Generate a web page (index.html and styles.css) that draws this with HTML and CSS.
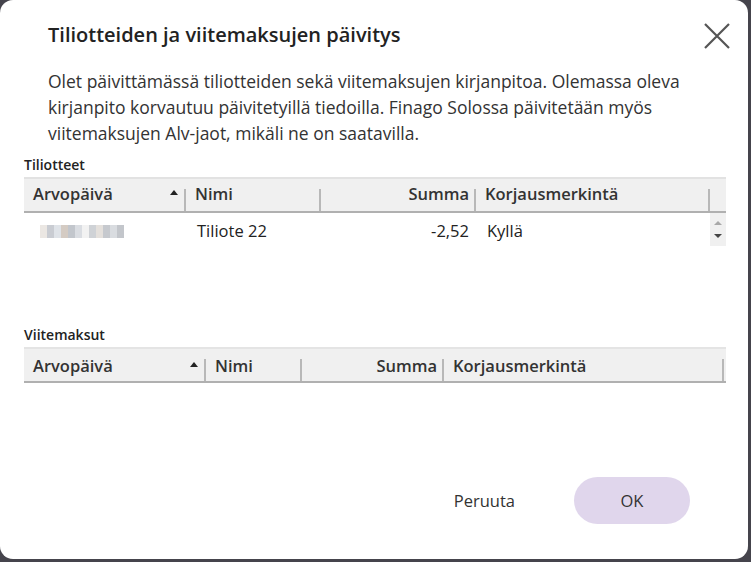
FILE: index.html
```html
<!DOCTYPE html>
<html lang="fi">
<head>
  <meta charset="UTF-8" />
  <title>Tiliotteiden ja viitemaksujen päivitys</title>
  <link rel="stylesheet" href="styles.css">
</head>
<body>

  <div class="dialog">
    <div class="dialog-head">
      <h1>Tiliotteiden ja viitemaksujen päivitys</h1>
      <button class="close-btn" title="Sulje">
        <svg width="28" height="28" viewBox="0 0 28 28">
          <path d="M2 2 L26 26 M26 2 L2 26" stroke="#555" stroke-width="2.2" fill="none"/>
        </svg>
      </button>
    </div>

    <p class="intro">
      Olet päivittämässä tiliotteiden sekä viitemaksujen kirjanpitoa. Olemassa oleva
      kirjanpito korvautuu päivitetyillä tiedoilla. Finago Solossa päivitetään myös
      viitemaksujen Alv-jaot, mikäli ne on saatavilla.
    </p>

    <!-- tiliotteet -->
    <div class="section-title">Tiliotteet</div>
    <div class="grid grid-statements">
      <div class="grid-header">
        <div class="hcell c-date">Arvopäivä <span class="sort"></span></div>
        <div class="hcell c-name">Nimi</div>
        <div class="hcell c-sum">Summa</div>
        <div class="hcell c-mark">Korjausmerkintä</div>
        <div class="hfill"></div>
      </div>
      <div class="grid-body">
        <div class="rows">
          <div class="row">
            <div class="cell c-date">
              <span class="blur">
                <i style="background:#ebe7e3"></i><i style="background:#c9ccd2"></i><i style="background:#dfe3e8"></i><i style="background:#d4cbc3"></i><i style="background:#c2c6cc"></i><i style="background:#dadde2"></i><i style="background:#f2f2f2"></i><i style="background:#cfd2d6"></i><i style="background:#e4e0dc"></i><i style="background:#c6c9ce"></i><i style="background:#d9dce0"></i><i style="background:#c3c6cb"></i>
              </span>
            </div>
            <div class="cell c-name">Tiliote 22</div>
            <div class="cell c-sum">-2,52</div>
            <div class="cell c-mark">Kyllä</div>
          </div>
        </div>
        <div class="scrollbar">
          <span class="arrow up"></span>
          <span class="arrow down"></span>
        </div>
      </div>
    </div>

    <!-- viitemaksut -->
    <div class="section-title second">Viitemaksut</div>
    <div class="grid grid-payments">
      <div class="grid-header">
        <div class="hcell c-date">Arvopäivä <span class="sort"></span></div>
        <div class="hcell c-name">Nimi</div>
        <div class="hcell c-sum">Summa</div>
        <div class="hcell c-mark">Korjausmerkintä</div>
      </div>
    </div>

    <div class="actions">
      <button class="btn-text">Peruuta</button>
      <button class="btn-ok">OK</button>
    </div>
  </div>

</body>
</html>
```

FILE: styles.css
```css
html, body {
  margin: 0;
  height: 100%;
}

body {
  background: #45444c;
  font-family: 'Open Sans', 'Noto Sans', sans-serif;
  color: #2b2b2b;
}

.dialog {
  width: 748px;
  height: 559px;
  background: #fff;
  border-radius: 13px;
  box-sizing: border-box;
  padding: 0 0 0 24px;
  display: flex;
  flex-direction: column;
}

.dialog-head {
  display: flex;
  align-items: flex-start;
  justify-content: space-between;
  padding: 22px 17px 0 24px;
}

.dialog-head h1 {
  margin: 0;
  font-size: 20px;
  font-weight: 600;
  color: #222;
  line-height: 26px;
}

.close-btn {
  border: none;
  background: none;
  padding: 0;
  width: 28px;
  height: 28px;
  margin-top: 0;
  cursor: pointer;
}

.intro {
  margin: 18px 20px 0 24px;
  font-size: 17.5px;
  line-height: 26px;
  color: #333;
}

.section-title {
  margin-top: 10px;
  font-size: 14px;
  font-weight: 600;
  line-height: 18px;
  color: #222;
}

.section-title.second {
  margin-top: 77px;
}

.grid {
  margin-top: 3px;
}

.grid-statements {
  width: 702px;
}

.grid-payments {
  width: 702px;
}

.grid-header {
  display: flex;
  height: 36px;
  background: #f0f0f0;
  border-top: 2px solid #e4e4e4;
  border-bottom: 2px solid #b0b0b0;
  box-sizing: border-box;
  font-size: 16.5px;
  font-weight: 600;
  color: #333;
}

.grid-statements .grid-header {
  border-top: none;
  background: linear-gradient(#e2e2e2 0 2px, #f0f0f0 2px);
}

.hcell {
  position: relative;
  box-sizing: border-box;
  padding: 0 9px;
  line-height: 34px;
  white-space: nowrap;
}

.hcell::after {
  content: "";
  position: absolute;
  right: 0;
  bottom: 0;
  width: 2px;
  height: 22px;
  background: #b8b8b8;
}

.hcell.c-sum {
  text-align: right;
  padding-right: 7px;
}

.sort {
  position: absolute;
  right: 8px;
  top: 13px;
  width: 0;
  height: 0;
  border-left: 4px solid transparent;
  border-right: 4px solid transparent;
  border-bottom: 5px solid #222;
}

.hfill {
  flex: 1;
}

/* tiliotteet column widths */
.grid-statements .c-date { width: 162px; }
.grid-statements .c-name { width: 135px; }
.grid-statements .c-sum  { width: 155px; }
.grid-statements .c-mark { width: 234px; }

/* viitemaksut column widths */
.grid-payments .c-date { width: 182px; }
.grid-payments .c-name { width: 96px; }
.grid-payments .c-sum  { width: 142px; }
.grid-payments .c-mark { width: 280px; }

.grid-body {
  display: flex;
}

.rows {
  width: 686px;
}

.row {
  display: flex;
  height: 36px;
  font-size: 16.5px;
  color: #222;
}

.cell {
  box-sizing: border-box;
  padding: 0 11px;
  line-height: 36px;
  white-space: nowrap;
}

.cell.c-date {
  padding-left: 16px;
}

.cell.c-sum {
  text-align: right;
  padding-right: 7px;
}

.blur {
  display: inline-flex;
  vertical-align: middle;
  margin-top: -3px;
}

.blur i {
  display: block;
  width: 7px;
  height: 13px;
}

.scrollbar {
  width: 16px;
  height: 33px;
  background: #f0f0f0;
  display: flex;
  flex-direction: column;
  align-items: center;
  justify-content: space-around;
  padding: 4px 0;
  box-sizing: border-box;
}

.arrow {
  width: 0;
  height: 0;
  border-left: 4px solid transparent;
  border-right: 4px solid transparent;
}

.arrow.up {
  border-bottom: 4px solid #a8a8a8;
}

.arrow.down {
  border-top: 4px solid #444;
}

.actions {
  margin-top: auto;
  margin-bottom: 35px;
  display: flex;
  justify-content: flex-end;
  align-items: center;
  gap: 47px;
  padding-right: 58px;
}

.btn-text {
  border: none;
  background: none;
  font-family: inherit;
  font-size: 16.5px;
  color: #333;
  padding: 0 12px;
  cursor: pointer;
}

.btn-ok {
  width: 116px;
  height: 47px;
  border: none;
  border-radius: 24px;
  background: #e0d6ec;
  font-family: inherit;
  font-size: 16.5px;
  color: #333;
  cursor: pointer;
}
```
